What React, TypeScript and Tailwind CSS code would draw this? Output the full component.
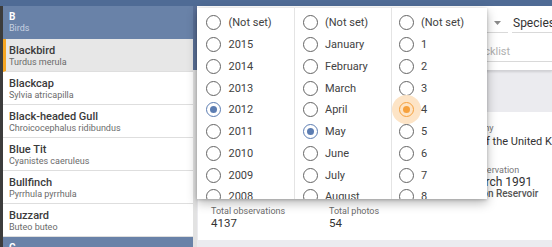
import React from "react";

const birds = [
  { name: "Blackbird", latin: "Turdus merula", selected: true },
  { name: "Blackcap", latin: "Sylvia atricapilla" },
  { name: "Black-headed Gull", latin: "Chroicocephalus ridibundus" },
  { name: "Blue Tit", latin: "Cyanistes caeruleus" },
  { name: "Bullfinch", latin: "Pyrrhula pyrrhula" },
  { name: "Buzzard", latin: "Buteo buteo" },
];

const years = ["(Not set)", "2015", "2014", "2013", "2012", "2011", "2010", "2009", "2008"];
const months = ["(Not set)", "January", "February", "March", "April", "May", "June", "July", "August"];
const days = ["(Not set)", "1", "2", "3", "4", "5", "6", "7", "8"];

type Mode = "none" | "blue" | "orange";

function Radio({ mode }: { mode: Mode }) {
  if (mode === "blue") {
    return (
      <span className="relative flex h-[15px] w-[15px] shrink-0 items-center justify-center rounded-full border-[1.5px] border-[#5c7db2]">
        <span className="h-[7px] w-[7px] rounded-full bg-[#5c7db2]" />
      </span>
    );
  }
  if (mode === "orange") {
    return (
      <span className="relative flex h-[15px] w-[15px] shrink-0 items-center justify-center">
        <span className="absolute left-[-7px] top-[-7px] h-[29px] w-[29px] rounded-full bg-[#fde4c6]" />
        <span className="relative flex h-[15px] w-[15px] items-center justify-center rounded-full border-[1.5px] border-[#f6a13d]">
          <span className="h-[7px] w-[7px] rounded-full bg-[#f6a13d]" />
        </span>
      </span>
    );
  }
  return <span className="h-[15px] w-[15px] shrink-0 rounded-full border-[1.5px] border-[#646464]" />;
}

function Column({ items, checked, mode, className }: { items: string[]; checked: string; mode: Mode; className: string }) {
  return (
    <div className={"flex flex-col overflow-hidden pt-[4px] " + className}>
      {items.map((it) => (
        <div key={it} className="flex h-[21.75px] shrink-0 items-center gap-[7.5px]">
          <Radio mode={it === checked ? mode : "none"} />
          <span className="whitespace-nowrap text-[11px] leading-none text-[#424242]">{it}</span>
        </div>
      ))}
    </div>
  );
}

function Caret() {
  return (
    <svg width="7" height="4" viewBox="0 0 7 4" className="shrink-0">
      <path d="M0 0 L7 0 L3.5 4 Z" fill="#8a8a8a" />
    </svg>
  );
}

export default function App() {
  return (
    <div
      className="relative flex h-[247px] w-[552px] flex-col overflow-hidden bg-white"
      style={{ fontFamily: "Roboto, 'Liberation Sans', sans-serif" }}
    >
      <div className="h-[6px] shrink-0 bg-[#4f6b95]" />
      <div className="flex min-h-0 flex-1">
        <div className="w-[3px] shrink-0 bg-[#3c3c3c]" />
        <div className="flex w-[190px] shrink-0 flex-col">
          <div className="h-[33px] shrink-0 bg-[#6982a8] pl-[6px] pt-[4px]">
            <div className="text-[10px] font-bold leading-[13px] text-white">B</div>
            <div className="text-[9px] leading-[11px] text-[#c8d2e2]">Birds</div>
          </div>
          {birds.map((b) => (
            <div
              key={b.name}
              className={
                "h-[33px] shrink-0 border-b border-[#dedede] pt-[5px] " +
                (b.selected ? "border-l-[3px] border-l-[#f5a623] bg-[#e7e7e7] pl-[3px]" : "bg-white pl-[6px]")
              }
            >
              <div className="whitespace-nowrap text-[11px] font-medium leading-[13px] text-[#3b3b3b]">{b.name}</div>
              <div className="whitespace-nowrap text-[9px] leading-[11px] text-[#6b6b6b]">{b.latin}</div>
            </div>
          ))}
          <div className="h-[33px] shrink-0 bg-[#6982a8] pl-[6px] pt-[4px]">
            <div className="text-[10px] font-bold leading-[13px] text-white">C</div>
            <div className="text-[9px] leading-[11px] text-[#c8d2e2]">Birds</div>
          </div>
        </div>
        <div className="flex w-[4px] shrink-0 flex-col bg-[#e2e2e2]">
          <div className="h-[64px] bg-[#5a7098]" />
        </div>
        <div className="flex min-w-0 flex-1 flex-col overflow-hidden bg-[#ebebef]">
          <div className="shrink-0 border-b border-[#d2d2d6] bg-white pb-[8px] pt-[8px] shadow-[0_1px_2px_rgba(0,0,0,0.12)]">
            <div className="flex gap-[4px] pl-[14px]">
              <div className="h-[19px] w-[205px] shrink-0 border-b border-[#d9d9d9]" />
              <div className="flex h-[19px] w-[88px] shrink-0 items-center justify-end border-b border-[#d9d9d9] pr-[7px]">
                <Caret />
              </div>
              <div className="flex h-[19px] w-[100px] shrink-0 items-center border-b border-[#d9d9d9] pl-[1px]">
                <span className="text-[12px] text-[#333]">Species</span>
              </div>
            </div>
            <div className="mt-[10px] flex gap-[4px] pl-[14px]">
              <div className="h-[19px] w-[215px] shrink-0" />
              <div className="flex h-[19px] w-[200px] shrink-0 items-center border-b border-[#d9d9d9]">
                <span className="text-[11px] text-[#b0b0b0]">Search checklist</span>
              </div>
            </div>
          </div>
          <div className="h-[41px] shrink-0" />
          <div className="ml-[1px] h-[128px] shrink-0 bg-white pl-[13px] pt-[10px]">
            <div className="grid grid-cols-[118px_123px_1fr]">
              <div className="h-[27px]" />
              <div className="h-[27px]" />
              <div className="whitespace-nowrap">
                <div className="text-[9px] leading-[12px] text-[#777]">Taxonomy</div>
                <div className="mt-[1px] text-[11px] leading-[14px] text-[#333]">Birds of the United Kingdom</div>
              </div>
              <div />
              <div />
              <div className="mt-[15px] whitespace-nowrap">
                <div className="text-[9px] leading-[12px] text-[#777]">First observation</div>
                <div className="text-[12px] leading-[12px] text-[#333]">15 March 1991</div>
                <div className="text-[10px] font-medium leading-[12px] text-[#555]">Abberton Reservoir</div>
              </div>
              <div className="mt-[5.5px]">
                <div className="text-[9px] leading-[10px] text-[#6b6b6b]">Total observations</div>
                <div className="mt-[1px] text-[11.5px] leading-[12px] text-[#333]">4137</div>
              </div>
              <div className="mt-[5.5px]">
                <div className="text-[9px] leading-[10px] text-[#6b6b6b]">Total photos</div>
                <div className="mt-[1px] text-[11.5px] leading-[12px] text-[#333]">54</div>
              </div>
            </div>
          </div>
        </div>
      </div>

      <div className="absolute left-[197px] top-[8px] flex h-[191px] w-[290px] bg-white shadow-[0_4px_10px_rgba(0,0,0,0.28),0_1px_3px_rgba(0,0,0,0.2)]">
        <Column items={years} checked="2012" mode="blue" className="w-[98px] shrink-0 border-r border-[#e4e4e4] pl-[9px]" />
        <Column items={months} checked="May" mode="blue" className="w-[97px] shrink-0 border-r border-[#e4e4e4] pl-[7.5px]" />
        <Column items={days} checked="4" mode="orange" className="flex-1 pl-[6.5px]" />
      </div>
    </div>
  );
}
